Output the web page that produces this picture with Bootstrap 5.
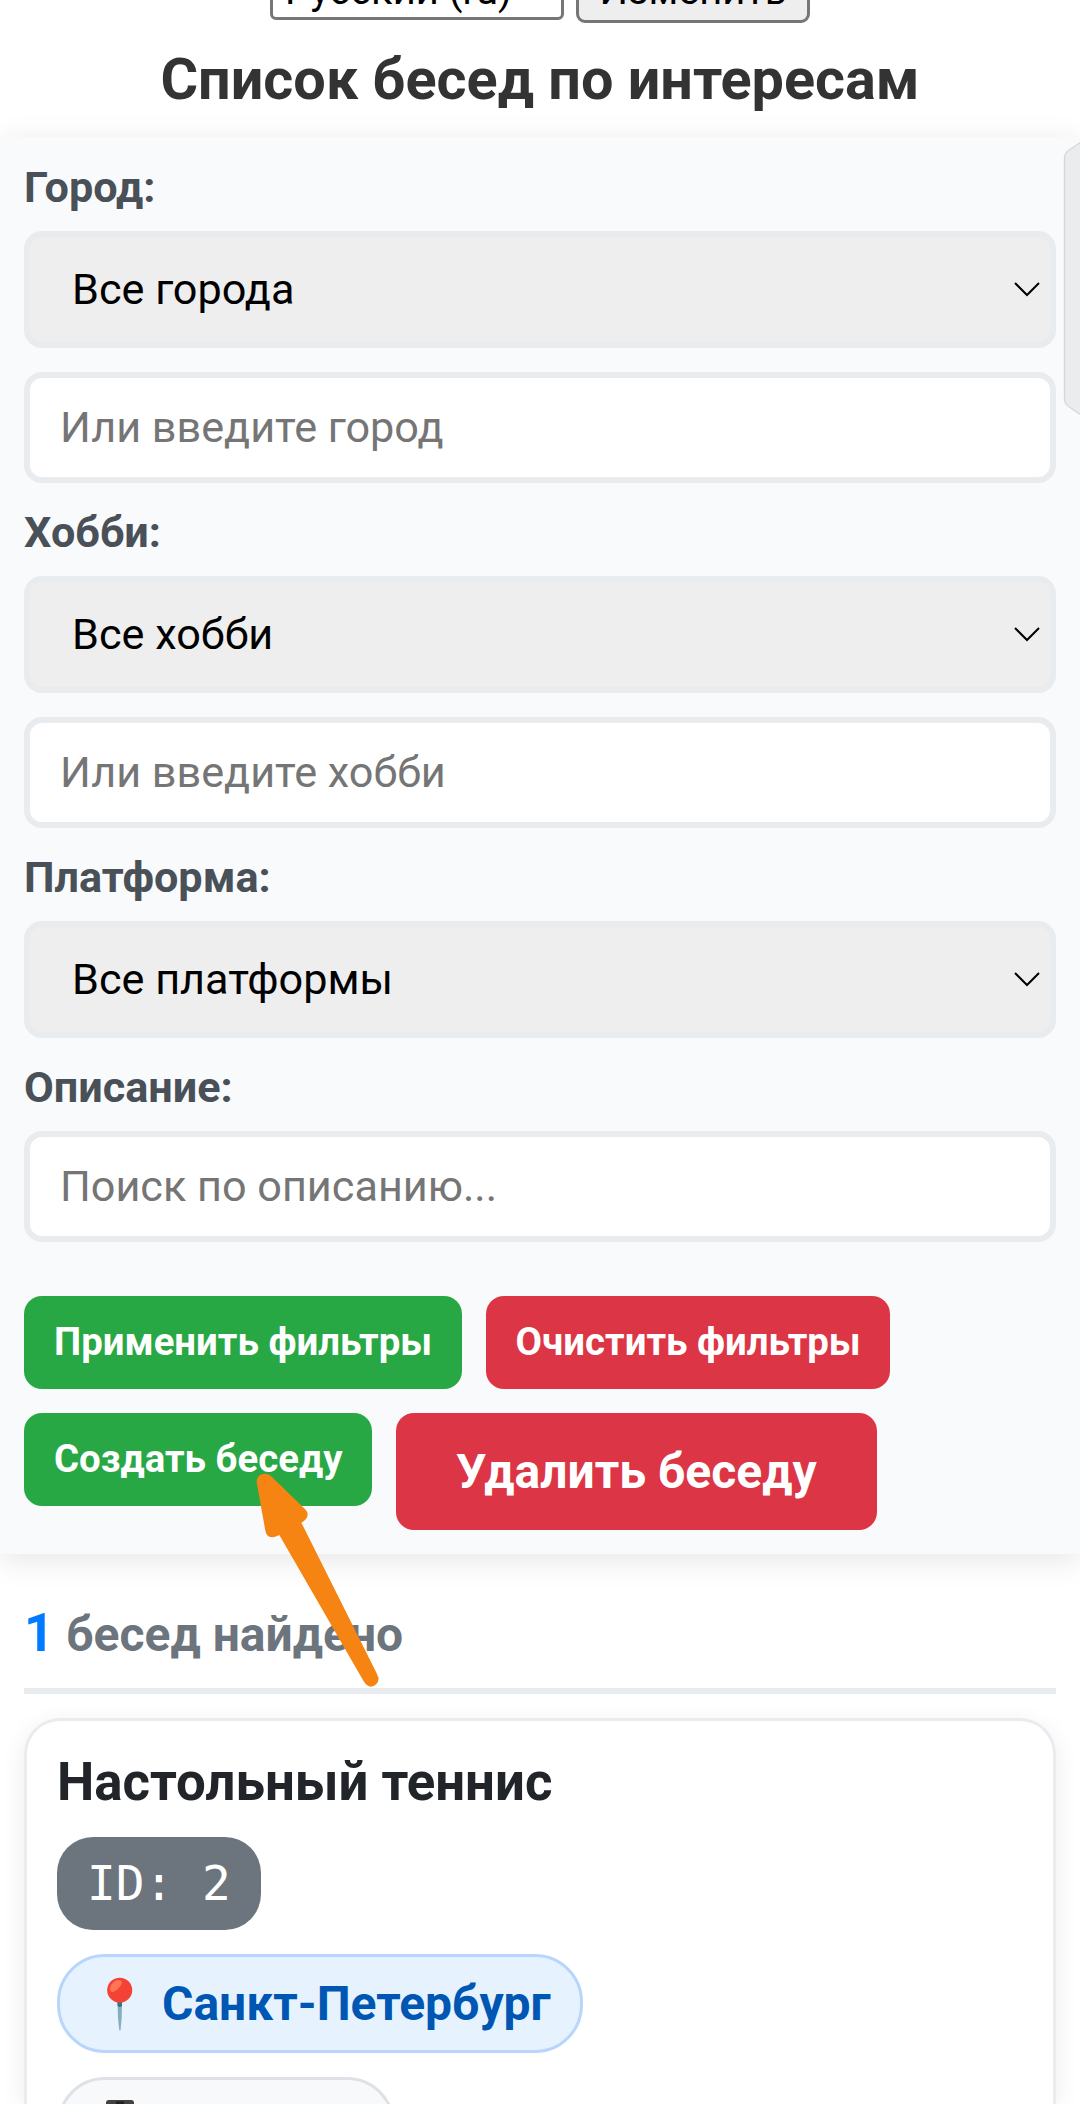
<!DOCTYPE html>
<html lang="ru">
<head>
<meta charset="utf-8">
<meta name="viewport" content="width=device-width, initial-scale=1">
<title>Список бесед по интересам</title>
<link rel="stylesheet" href="https://cdn.jsdelivr.net/npm/bootstrap@5.3.0/dist/css/bootstrap.min.css">
<style>
html,body{height:2104px;overflow:hidden}
body{font-family:Roboto,"Liberation Sans",sans-serif;background:#fff;color:#000;font-size:43.2px;line-height:1.2}
.lang-bar{height:23px;gap:12px}
.lang-select,.lang-btn{flex:none;border:3px solid #767676;color:#000;font-size:40px;line-height:47px;white-space:nowrap}
.lang-select{width:294px;height:60px;border-radius:6px;padding:4px 12px 0;margin-top:-40px;background:#fff}
.lang-btn{width:234px;height:68px;border-radius:9px;padding:9px 18px 0;margin-top:-45px;background:#eee;text-align:center}
.page-title{font-size:57.6px;font-weight:700;line-height:66px;color:#333;height:114px;padding-top:24px}
.filters{background:#f8fafc;padding:25px 24px 24px;height:1417px;box-shadow:0 6px 30px rgba(0,0,0,.1)}
.field-label{font-weight:700;line-height:50px;color:#495057;padding-top:1px;margin-bottom:18px}
.pick,.entry{border:6px solid #e8ecef;border-radius:18px;height:117px;padding:0 9px 0 42px;background:#eee;color:#000}
.entry{height:111px;padding:0 30px;background:#fff}
.entry::placeholder{color:#757575;opacity:1}
.act-row{margin-top:54px}
.act{font-size:38.4px;font-weight:700;line-height:45px;color:#fff;border:0;border-radius:18px;padding:23px 29.5px 25px 30px;height:93px;white-space:nowrap}
.act-go{background:#28a745}
.act-stop{background:#dc3545}
.act-lg{font-size:48px;line-height:57px;padding:30px 60px;height:117px}
.results{height:550px}
.found{font-size:48px;font-weight:700;line-height:63px;color:#6c757d;border-bottom:6px solid #e8ecef;height:116px;padding-top:24px}
.found-num{font-size:52.8px;color:#007bff}
.chat-card{border:3px solid #e8ecef;border-bottom:0;border-radius:36px 36px 0 0;box-shadow:0 6px 24px rgba(0,0,0,.08);padding:30px 30px 0;height:386px;overflow:hidden}
.chat-title{font-size:52.8px;font-weight:700;line-height:62px;color:#212529}
.chip{flex:none;border-radius:48px;white-space:nowrap}
.chip-id{background:#6c757d;color:#fff;font-family:"DejaVu Sans Mono","Liberation Mono",monospace;font-size:47.8px;line-height:93px;height:93px;border-radius:36px;padding:0 30px}
.chip-city{background:#e6f3ff;border:3px solid #b8d6fb;color:#0056b3;font-size:48px;font-weight:700;width:526px;height:99px;line-height:93px;padding-left:30px;gap:12px}
.chip-app{background:#f8f9fa;border:3px solid #dee2e6;height:99px;width:338px;padding:20px 0 0 46px}
.side-tab{right:0;top:140px}
.pointer{left:240px;top:1460px}
</style>
</head>
<body class="position-relative">
<div class="lang-bar d-flex justify-content-center">
  <div class="lang-select">Русский (ru)</div>
  <div class="lang-btn">Изменить</div>
</div>
<h1 class="page-title text-center mb-0">Список бесед по интересам</h1>
<form class="filters">
  <div class="field-label">Город:</div>
  <div class="pick d-flex align-items-center justify-content-between"><span>Все города</span><svg width="28" height="16" viewBox="0 0 28 16"><path d="M2 1 14 13 26 1" fill="none" stroke="#000" stroke-width="2"/></svg></div>
  <input class="entry d-block w-100 mt-4" placeholder="Или введите город">
  <div class="field-label mt-4">Хобби:</div>
  <div class="pick d-flex align-items-center justify-content-between"><span>Все хобби</span><svg width="28" height="16" viewBox="0 0 28 16"><path d="M2 1 14 13 26 1" fill="none" stroke="#000" stroke-width="2"/></svg></div>
  <input class="entry d-block w-100 mt-4" placeholder="Или введите хобби">
  <div class="field-label mt-4">Платформа:</div>
  <div class="pick d-flex align-items-center justify-content-between"><span>Все платформы</span><svg width="28" height="16" viewBox="0 0 28 16"><path d="M2 1 14 13 26 1" fill="none" stroke="#000" stroke-width="2"/></svg></div>
  <div class="field-label mt-4">Описание:</div>
  <input class="entry d-block w-100" placeholder="Поиск по описанию...">
  <div class="act-row d-flex flex-wrap align-items-start gap-4">
    <button type="button" class="btn act act-go">Применить фильтры</button>
    <button type="button" class="btn act act-stop">Очистить фильтры</button>
    <button type="button" class="btn act act-go">Создать беседу</button>
    <button type="button" class="btn act act-stop act-lg">Удалить беседу</button>
  </div>
</form>
<main class="results px-4 pt-4 overflow-hidden">
  <div class="found"><span class="found-num">1</span> бесед найдено</div>
  <div class="chat-card d-flex flex-column align-items-start gap-4 mt-4">
    <h2 class="chat-title mb-0">Настольный теннис</h2>
    <div class="chip chip-id">ID: 2</div>
    <div class="chip chip-city d-flex align-items-center">
      <svg width="60" height="60" viewBox="0 0 60 60"><path d="M27.500 26h4.500l-.3 18-1.200 12.500h-1.200L28 44Z" fill="#82aec0"/><path d="M27.500 27h4.500v5q-2.200 2-4.500 0Z" fill="#2f7889"/><circle cx="29.700" cy="16.200" r="12.500" fill="#f44336"/><path d="M20.500 17c-2-4 3-11.500 8.500-11 4 .5 3 4 1 6.500-3 3.500-7.500 7.500-9.500 4.500Z" fill="#ff7555"/></svg>
      <span>Санкт-Петербург</span>
    </div>
    <div class="chip chip-app">
      <svg class="d-block" width="28" height="52" viewBox="0 0 28 52"><rect width="28" height="52" rx="3" fill="#424242"/><rect x="10" y="1.500" width="8" height="3" fill="#212121"/><rect x="2" y="6" width="24" height="38" fill="#616161"/></svg>
    </div>
  </div>
</main>
<svg class="side-tab position-absolute" width="17" height="278" viewBox="0 0 17 278"><path d="M18 2 5.500 10.500Q1.500 13.500 1.500 18V259Q1.500 263.500 5.500 266.500L18 275" fill="#ebecee" stroke="#d6d7d9" stroke-width="1.300"/></svg>
<svg class="pointer position-absolute" width="150" height="240" viewBox="0 0 450 720"><path d="M92 47Q82 39 68 42Q50 47 50 66L76 212Q80 232 98 232Q108 231 118 225L371 664Q381 680 393 680Q414 677 416 655L410 640 184 188Q203 178 203 162Q203 155 194 146Z" fill="#f58413"/></svg>
<script src="https://cdn.jsdelivr.net/npm/bootstrap@5.3.0/dist/js/bootstrap.bundle.min.js"></script>
</body>
</html>
